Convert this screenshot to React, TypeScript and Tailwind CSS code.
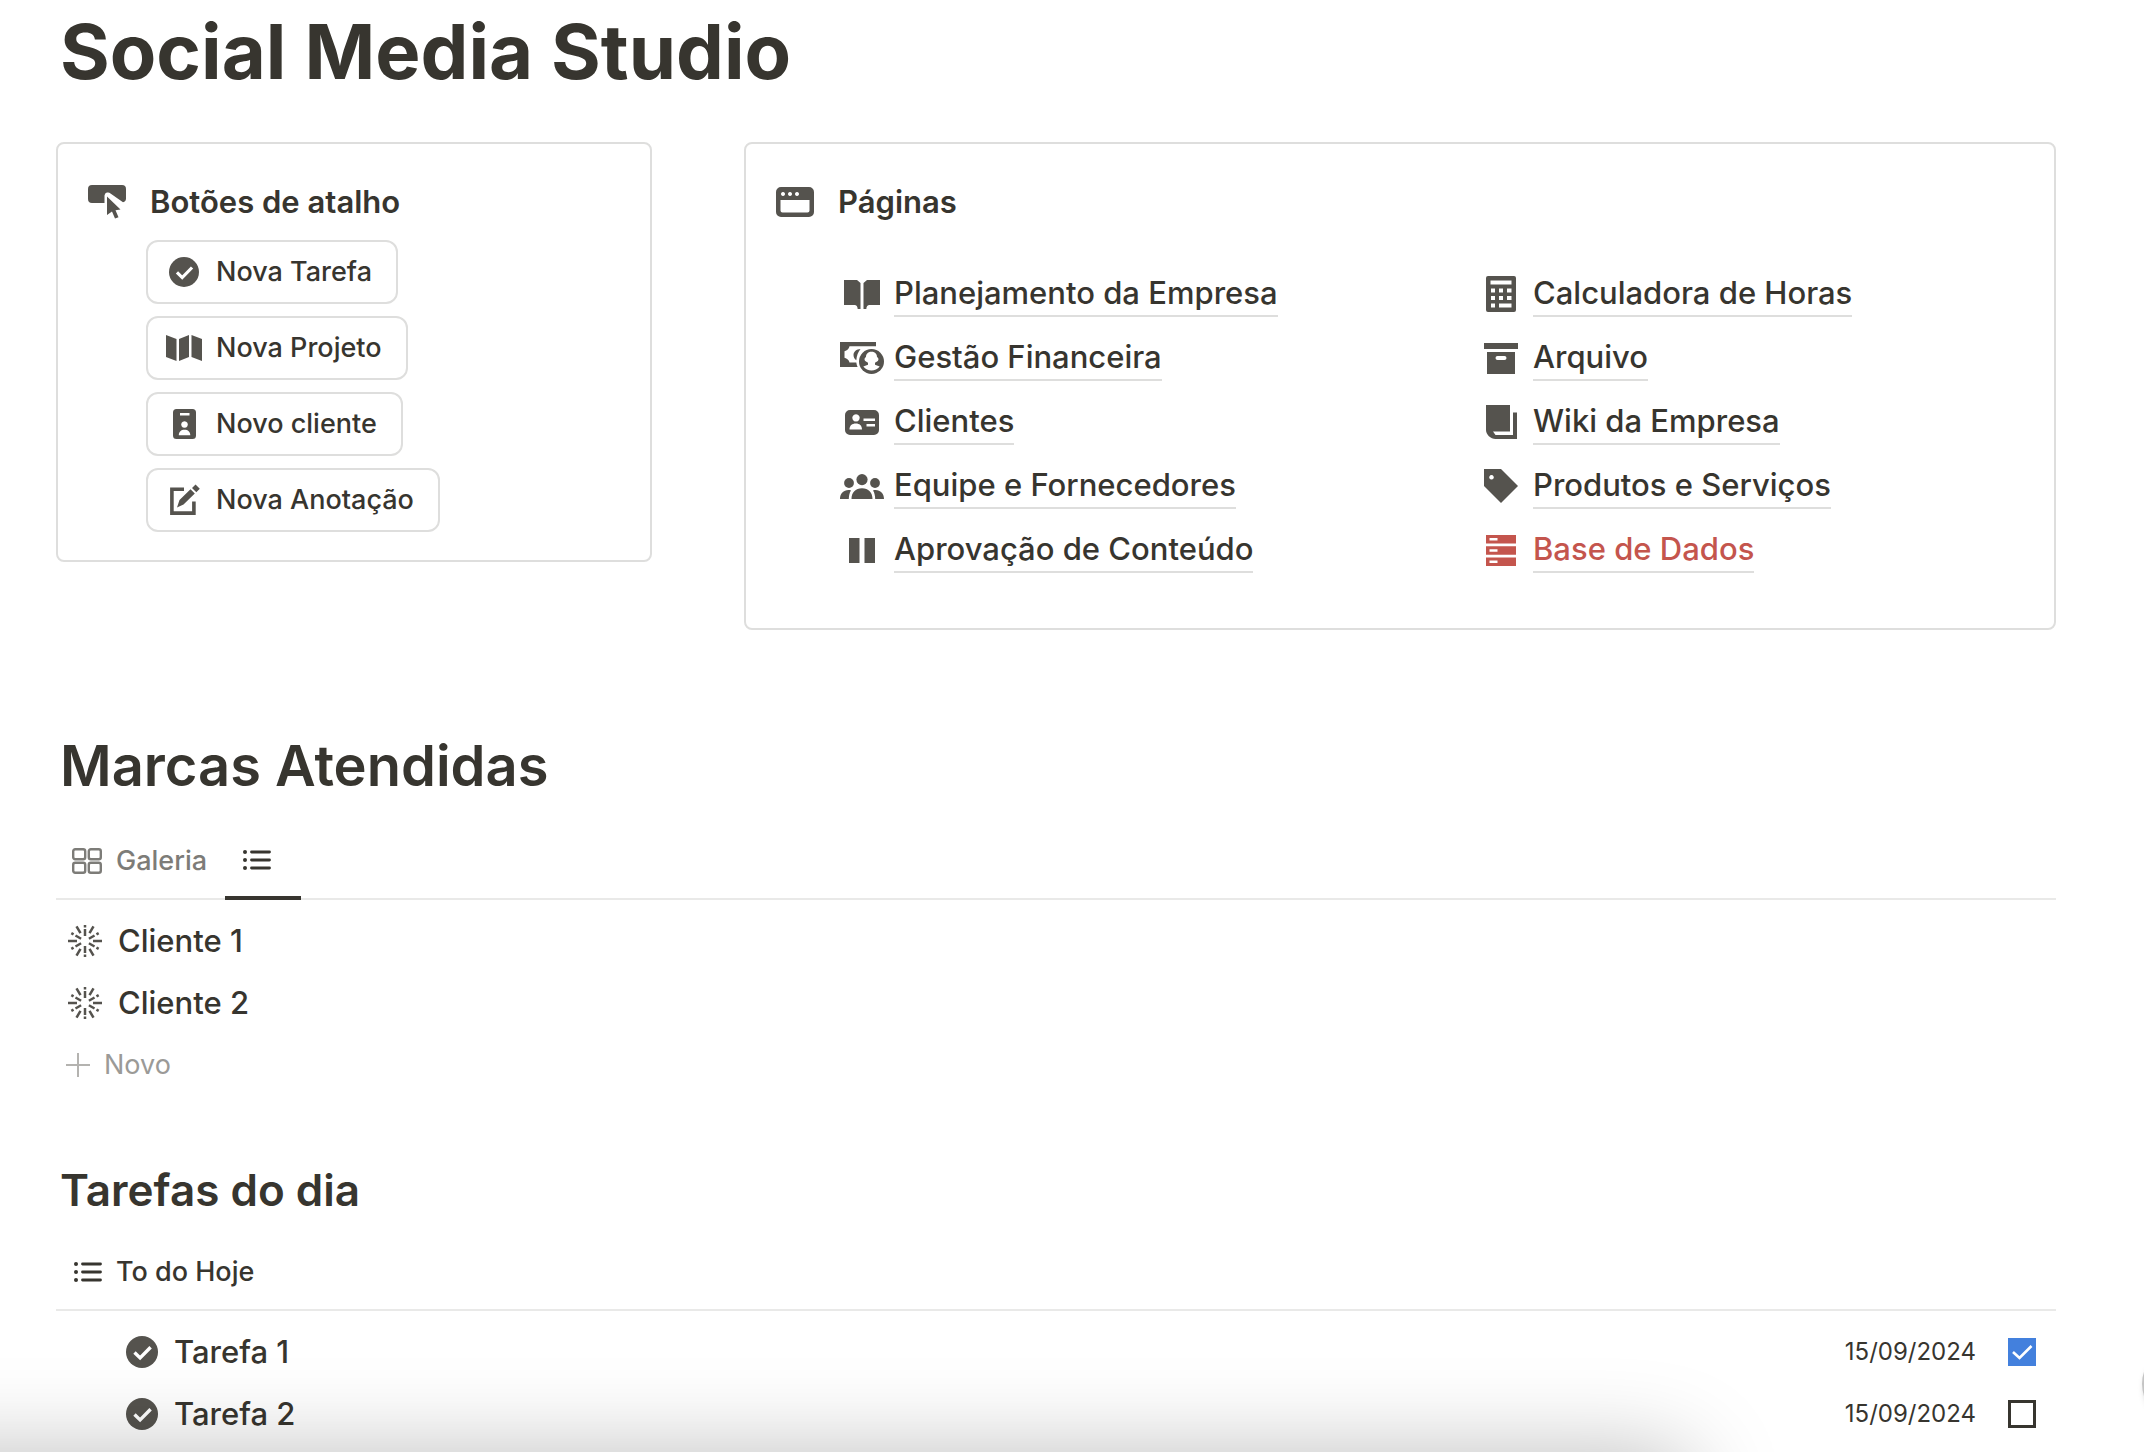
import React from "react";

const ICON = "#55534e";

function Svg({ w, h, vb, children, color = ICON }: { w: number; h: number; vb: string; children: React.ReactNode; color?: string }) {
  return (
    <svg width={w} height={h} viewBox={vb} fill={color} aria-hidden="true" className="shrink-0">
      {children}
    </svg>
  );
}

function CheckCircle({ size }: { size: number }) {
  return (
    <Svg w={size} h={size} vb="0 0 32 32">
      <circle cx="16" cy="16" r="16" />
      <path d="M8.5 16.5l5.6 5.4L24.6 11.2" fill="none" stroke="#fff" strokeWidth="3.4" />
    </Svg>
  );
}

function ListIcon() {
  return (
    <Svg w={28} h={22} vb="0 0 28 22" color="#37352f">
      <circle cx="2" cy="3" r="2" />
      <circle cx="2" cy="11" r="2" />
      <circle cx="2" cy="19" r="2" />
      <path d="M8.5 3h18M8.5 11h18M8.5 19h18" stroke="#37352f" strokeWidth="2.8" strokeLinecap="round" />
    </Svg>
  );
}

function rayPath(i: number) {
  if (i % 6 === 0) return "M0 -5v-7M0 -13.5v-2.5";
  if (i % 3 === 0) return "M0 -8v-9";
  if (i % 6 === 1 || i % 6 === 5) return "M0 -9v-8";
  return "M0 -4.500v-6.500M0 -13.200v-2.600";
}

function Burst() {
  return (
    <Svg w={34} h={34} vb="-17 -17 34 34">
      {Array.from({ length: 12 }, (_, i) => (
        <path key={i} d={rayPath(i)} transform={`rotate(${i * 30})`} stroke={ICON} strokeWidth="2.500" />
      ))}
    </Svg>
  );
}

const shortcuts = [
  { label: "Nova Tarefa", icon: <CheckCircle size={30} /> },
  {
    label: "Nova Projeto",
    icon: (
      <Svg w={36} h={26} vb="0 0 36 26">
        <path d="M0 0l10.500 4v22L0 22zM13 4l10-4v22l-10 4zM25.500 0L36 4v22l-10.500-4z" />
      </Svg>
    ),
  },
  {
    label: "Novo cliente",
    icon: (
      <Svg w={23} h={30} vb="0 0 23 30">
        <path fillRule="evenodd" d="M3.500 0h16A3.500 3.500 0 0 1 23 3.500v23a3.500 3.500 0 0 1-3.500 3.500h-16A3.500 3.500 0 0 1 0 26.500v-23A3.500 3.500 0 0 1 3.500 0zM7 4v2.400h9.500V4zM11.500 12.200a3.300 3.300 0 1 0 .01 0zM5.800 26.300h11.500c0-3.600-2.400-5.600-5.800-5.600s-5.700 2-5.700 5.600z" />
      </Svg>
    ),
  },
  {
    label: "Nova Anotação",
    icon: (
      <Svg w={32} h={32} vb="0 0 32 32">
        <path d="M16 5.200H3.900v23.900h22V17.500" fill="none" stroke={ICON} strokeWidth="3.600" />
        <path d="M9 23.500l2.500-7.500L22.500 5.300l4.300 4.300L15.500 20.500zM24 4l3.500-3.500 4.300 4.300L28.300 8.300z" />
      </Svg>
    ),
  },
];

const leftPages = [
  {
    label: "Planejamento da Empresa",
    icon: (
      <Svg w={36} h={29} vb="0 0 36 29">
        <path d="M0 0h13l3.500 3V29h-2.800c-.2-2.600-1.200-4-3.200-4H0zM36 0H23l-3.500 3V29h2.800c.2-2.600 1.200-4 3.200-4H36z" />
      </Svg>
    ),
  },
  {
    label: "Gestão Financeira",
    icon: (
      <Svg w={44} h={32} vb="0 0 44 32">
        <path d="M0 0h36v4.200H9.500c-.5 2.500-2.500 4.500-5 5v6.600c2.500.5 4.500 2.500 5 4.700h6.800c.2 1.600.6 3 1.300 4.500H0z" />
        <path d="M20.500 7c-4 .2-7 2.700-7 6 0 2.200 1 4.200 2.800 5.200.4-4.500 1.700-8.200 4.200-11.200z" />
        <circle cx="31.500" cy="19.500" r="12.500" />
        <path fill="#fff" d="M31.500 9.800c4 0 5.500 2.700 5.500 5.200 1.500 1 2 2.500.8 4l-2.800 1.700v2.100l4.700 1.800c-4.100 5.200-12.300 5.200-16.400 0l4.700-1.800v-2.100L25.200 19c-1.200-1.500-.7-3 .8-4 0-2.500 1.500-5.200 5.500-5.200z" />
      </Svg>
    ),
  },
  {
    label: "Clientes",
    icon: (
      <Svg w={34} h={25} vb="0 0 34 25">
        <path fillRule="evenodd" d="M5 0h24a5 5 0 0 1 5 5v15a5 5 0 0 1-5 5H5a5 5 0 0 1-5-5V5a5 5 0 0 1 5-5zM11 4.200a3.700 3.700 0 1 0 .01 0zM4.500 19.500H17c0-4-2.500-6-6.200-6s-6.300 2-6.300 6zM18.500 8.500v2.600H30V8.500zM21.500 14v2.600H30V14z" />
      </Svg>
    ),
  },
  {
    label: "Equipe e Fornecedores",
    icon: (
      <Svg w={44} h={25} vb="0 0 44 25">
        <circle cx="22" cy="5.600" r="5.600" />
        <circle cx="9" cy="9" r="4.900" />
        <circle cx="35" cy="9" r="4.900" />
        <path d="M11.500 25c0-6.500 4-10.800 10.500-10.800S32.500 18.500 32.500 25zM0 25c0-5.400 3.500-9 8.500-9 1 0 1.800.1 2.500.4C9.500 18.600 8.800 21.800 8.800 25zM44 25c0-5.400-3.500-9-8.500-9-1 0-1.800.1-2.500.4 1.500 2.200 2.200 5.400 2.200 8.600z" />
      </Svg>
    ),
  },
  {
    label: "Aprovação de Conteúdo",
    icon: (
      <Svg w={26} h={25} vb="0 0 26 25">
        <path d="M0 0h10.500v25H0zM15.500 0H26v25H15.500z" />
      </Svg>
    ),
  },
];

const rightPages = [
  {
    label: "Calculadora de Horas",
    icon: (
      <Svg w={30} h={36} vb="0 0 30 36">
        <path fillRule="evenodd" d="M2 0h26a2 2 0 0 1 2 2v32a2 2 0 0 1-2 2H2a2 2 0 0 1-2-2V2a2 2 0 0 1 2-2zM4.500 4.500v4h21v-4zM5 12.500v4h4v-4zM13 12.500v4h4v-4zM21 12.500v4h4.500v-4zM5 20v4h4v-4zM13 20v4h4v-4zM21 20v4h4.500v-4zM5 27.500v4h4v-4zM13 27.500v4h12.500v-4z" />
      </Svg>
    ),
  },
  {
    label: "Arquivo",
    icon: (
      <Svg w={34} h={31} vb="0 0 34 31">
        <path fillRule="evenodd" d="M0 0h34v6H0zM3 9h28v22H3zM13.500 13a1.900 1.900 0 0 0 0 4h7a1.900 1.900 0 0 0 0-4z" />
      </Svg>
    ),
  },
  {
    label: "Wiki da Empresa",
    icon: (
      <Svg w={31} h={34} vb="0 0 31 34">
        <path d="M0 0h24v26.500H7l2.500 3.500H27V7.500h4V34H9.500C4.500 34 0 29.500 0 25z" />
      </Svg>
    ),
  },
  {
    label: "Produtos e Serviços",
    icon: (
      <Svg w={34} h={34} vb="0 0 34 34">
        <path fillRule="evenodd" d="M0 0h17l17 17-17 17L0 17zM7.500 6a2.300 2.300 0 1 0 .01 0z" />
      </Svg>
    ),
  },
  {
    label: "Base de Dados",
    red: true,
    icon: (
      <Svg w={30} h={31} vb="0 0 30 31" color="#c4554d">
        <path fillRule="evenodd" d="M0 0h30v8.500H0zM0 11.200h30v8.500H0zM0 22.500h30V31H0zM3.500 3v2.500h8V3zM3.500 14.200v2.500h8v-2.500zM3.500 25.500V28h8v-2.500z" />
      </Svg>
    ),
  },
];

function PageList({ pages }: { pages: { label: string; icon: React.ReactNode; red?: boolean }[] }) {
  return (
    <ul className="flex min-w-0 flex-1 flex-col">
      {pages.map((p) => (
        <li key={p.label} className="flex h-16 items-center gap-2.5">
          <span className="flex h-11 w-11 shrink-0 items-center justify-center">{p.icon}</span>
          <a
            href="#"
            className={
              p.red
                ? "border-b-2 border-[#dededd] text-[31px] leading-11 font-medium whitespace-nowrap text-[#c4554d]"
                : "border-b-2 border-[#dededd] text-[31px] leading-11 font-medium whitespace-nowrap"
            }
          >
            {p.label}
          </a>
        </li>
      ))}
    </ul>
  );
}

function Task({ name, done }: { name: string; done: boolean }) {
  return (
    <li className="flex h-[62px] items-center pr-5 pl-[70px]">
      <CheckCircle size={32} />
      <span className="ml-4 flex-1 text-[31px] font-medium">{name}</span>
      <time className="text-2xl">15/09/2024</time>
      <input
        type="checkbox"
        defaultChecked={done}
        aria-label={name}
        className="peer ml-8 h-7 w-7 appearance-none border-3 border-[#37352f] bg-white checked:border-[#4380dd] checked:bg-[#4380dd]"
      />
      <svg viewBox="0 0 28 28" className="pointer-events-none -ml-7 h-7 w-7 opacity-0 peer-checked:opacity-100" aria-hidden="true">
        <path d="M5 14l6.500 6L23.500 8" fill="none" stroke="#fff" strokeWidth="2.600" />
      </svg>
    </li>
  );
}

export default function App() {
  return (
    <div className="relative h-screen overflow-hidden bg-white font-[Inter,sans-serif] text-[#37352f]">
      <main className="pr-[88px] pl-14">
        <h1 className="px-1 text-[76px] leading-[102px] font-bold">Social Media Studio</h1>

        <div className="mt-10 flex items-start gap-[92px]">
          <section className="w-[596px] shrink-0 rounded-lg border-2 border-[#dededd] pt-9 pb-7 pl-[30px]">
            <div className="flex h-11 items-center gap-6">
              <Svg w={38} h={34} vb="0 0 38 34">
                <path d="M4 0h30a4 4 0 0 1 4 4v9.500a4 4 0 0 1-3 3.800L22.500 8.500a3.500 3.500 0 0 0-6 2v7.500H4a4 4 0 0 1-4-4V4a4 4 0 0 1 4-4z" />
                <path d="M19 11.500l13.500 13-5 .7 3 7-3.500 1.300-3-7-5 3.500z" />
              </Svg>
              <h2 className="text-[31px] font-semibold">Botões de atalho</h2>
            </div>
            <div className="mt-4 ml-[58px] flex flex-col items-start gap-3">
              {shortcuts.map((s) => (
                <button key={s.label} className="flex h-16 items-center gap-3 rounded-xl border-2 border-[#dededd] pr-6 pl-4 text-[27px] font-medium">
                  <span className="flex w-10 justify-center">{s.icon}</span>
                  {s.label}
                </button>
              ))}
            </div>
          </section>

          <section className="min-w-0 flex-1 rounded-lg border-2 border-[#dededd] pt-9 pb-[46px] pl-[30px]">
            <div className="flex h-11 items-center gap-6">
              <Svg w={38} h={30} vb="0 0 38 30">
                <path fillRule="evenodd" d="M5 0h28a5 5 0 0 1 5 5v20a5 5 0 0 1-5 5H5a5 5 0 0 1-5-5V5a5 5 0 0 1 5-5zM4.500 13v10.500a2 2 0 0 0 2 2h25a2 2 0 0 0 2-2V13zM7 5a2 2 0 1 0 .01 0zM14 5a2 2 0 1 0 .01 0zM21 5a2 2 0 1 0 .01 0z" />
              </Svg>
              <h2 className="text-[31px] font-semibold">Páginas</h2>
            </div>
            <div className="mt-[38px] ml-16 flex gap-16">
              <PageList pages={leftPages} />
              <PageList pages={rightPages} />
            </div>
          </section>
        </div>

        <section className="mt-24">
          <h2 className="px-1 text-[56px] leading-20 font-semibold">Marcas Atendidas</h2>
          <div className="mt-[18px] flex h-[76px] border-b-2 border-[#e9e9e8]">
            <button className="flex items-center gap-3.5 pr-[18px] pl-4 text-[27px] font-medium text-[#7d7c78]">
              <svg width="30" height="26" viewBox="0 0 30 26" fill="none" stroke="#7d7c78" strokeWidth="2.4" aria-hidden="true">
                <rect x="1.200" y="1.200" width="12" height="10" rx="2" />
                <rect x="16.800" y="1.200" width="12" height="10" rx="2" />
                <rect x="1.200" y="14.800" width="12" height="10" rx="2" />
                <rect x="16.800" y="14.800" width="12" height="10" rx="2" />
              </svg>
              Galeria
            </button>
            <button aria-label="Lista" className="-mb-0.5 flex w-19 items-center border-b-4 border-[#37352f] pl-[18px]">
              <ListIcon />
            </button>
          </div>
          <ul className="mt-2.5">
            {["Cliente 1", "Cliente 2"].map((c) => (
              <li key={c} className="flex h-[62px] items-center gap-4 pl-3 text-[31px] font-medium">
                <Burst />
                {c}
              </li>
            ))}
          </ul>
          <button className="flex h-[62px] items-center gap-3.5 pl-2.5 text-[27px] text-[#9b9a97]">
            <svg width="24" height="24" viewBox="0 0 24 24" stroke="#b4b3b0" strokeWidth="2" aria-hidden="true">
              <path d="M12 0v24M0 12h24" />
            </svg>
            Novo
          </button>
        </section>

        <section className="mt-[62px]">
          <h2 className="px-1 text-[44px] leading-16 font-semibold">Tarefas do dia</h2>
          <div className="mt-[13px] flex h-[76px] items-center gap-3.5 border-b-2 border-[#e9e9e8] pl-[18px] text-[27px] font-medium">
            <ListIcon />
            To do Hoje
          </div>
          <ul className="mt-2.5">
            <Task name="Tarefa 1" done />
            <Task name="Tarefa 2" done={false} />
          </ul>
        </section>
      </main>
      <div className="pointer-events-none absolute top-full -left-40 h-40 w-[1850px] rounded-3xl shadow-[0_0_90px_rgba(0,0,0,0.26)]" />
      <div className="pointer-events-none absolute -right-[70px] bottom-8 size-18 rounded-full border-2 border-[#c4c4c4] shadow-md" />
    </div>
  );
}
